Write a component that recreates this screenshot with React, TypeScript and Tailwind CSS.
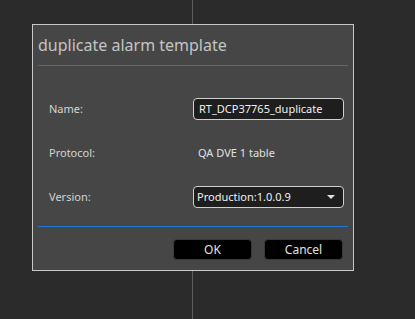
import React from "react";

export default function App() {
  const font = { fontFamily: '"Noto Sans", "Open Sans", sans-serif' };
  return (
    <div className="relative w-[415px] h-[319px] bg-[#2b2b2b] overflow-hidden pt-[24px] pl-[32px]" style={font}>
      <div className="absolute left-[192px] top-0 w-px h-full bg-[#5e5e5e]" />
      <div className="relative w-[322px] h-[247px] bg-[#464646] border border-[#c8c8c8] flex flex-col">
        <div className="px-[5px]">
          <div className="h-[40px] pt-[7px] text-[16px] leading-[26px] text-[#c4c4c4]">duplicate alarm template</div>
          <div className="h-px bg-[#1f78d0]" />
        </div>
        <div className="flex flex-col pl-[16px] pr-[9px] pt-[32px] text-[11px] text-[#d4d4d4]">
          <div className="flex items-center h-[22px]">
            <div className="w-[144px]">Name:</div>
            <div className="flex-1 h-[22px] rounded-[4px] border border-[#d0d0d0] bg-[#1e1e1e] flex items-center px-[5px] text-[#f0f0f0]">
              RT_DCP37765_duplicate
            </div>
          </div>
          <div className="flex items-center h-[22px] mt-[22px]">
            <div className="w-[144px]">Protocol:</div>
            <div className="pl-[5px] text-[#e0e0e0]">QA DVE 1 table</div>
          </div>
          <div className="flex items-center h-[22px] mt-[22px]">
            <div className="w-[144px]">Version:</div>
            <div className="flex-1 h-[22px] rounded-[4px] border border-[#d0d0d0] bg-[#1e1e1e] flex items-center justify-between pl-[3px] pr-[8px] text-[#f0f0f0]">
              <span>Production:1.0.0.9</span>
              <svg width="8" height="4" viewBox="0 0 8 4"><path d="M0 0h8L4 4z" fill="#e0e0e0" /></svg>
            </div>
          </div>
        </div>
        <div className="px-[5px] mt-[18px]">
          <div className="h-px bg-[#1f78d0]" />
        </div>
        <div className="flex justify-end gap-[12px] pr-[10px] mt-[12px]">
          <button className="w-[79px] h-[21px] rounded-[4px] bg-black border border-[#3a3a3a] text-[12px] text-[#e0e0e0]">OK</button>
          <button className="w-[79px] h-[21px] rounded-[4px] bg-black border border-[#3a3a3a] text-[12px] text-[#e0e0e0]">Cancel</button>
        </div>
      </div>
    </div>
  );
}
